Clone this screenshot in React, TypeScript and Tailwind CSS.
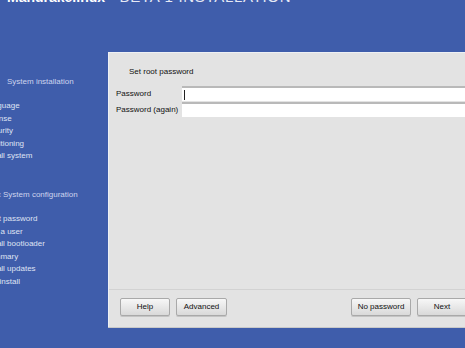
const installSteps = ["Language", "License", "Security", "Partitioning", "Install system"];
const configSteps = ["Root password", "Add a user", "Install bootloader", "Summary", "Install updates", "Exit install"];

function Button({ label, width }: { label: string; width: string }) {
  return (
    <button
      className={`${width} h-[18px] rounded-[2px] border border-[#a9a9a9] bg-gradient-to-b from-[#f7f7f7] to-[#d9d9d9] text-[8px] leading-none text-[#111] shadow-[0_1px_0_#c4c4c4]`}
    >
      {label}
    </button>
  );
}

function Field({ label, focused }: { label: string; focused?: boolean }) {
  return (
    <div className="flex h-[15px] items-center">
      <span className="w-[66px] shrink-0 text-[8px] leading-none text-[#111]">{label}</span>
      <div className="flex h-[15px] flex-1 items-center border-t-2 border-[#b9b9b9] bg-white pl-[2px]">
        {focused && <span className="h-[10px] w-px bg-[#222]" />}
      </div>
    </div>
  );
}

export default function App() {
  return (
    <div
      className="flex h-[348px] w-[465px] flex-col overflow-hidden bg-[#3f5dab]"
      style={{ fontFamily: '"Liberation Sans", Arial, sans-serif' }}
    >
      {/* Title, cut off by the top of the window */}
      <div className="h-[52px] shrink-0">
        <p className="-mt-[11px] ml-[7px] flex items-baseline whitespace-nowrap leading-none text-white">
          <span className="text-[14px] font-bold">Mandrakelinux</span>
          <span className="ml-[4px] text-[15px] tracking-[0.7px] text-[#e6e9f5]">- BETA 1 INSTALLATION</span>
        </p>
      </div>

      <div className="flex flex-1">
        {/* Step list */}
        <div className="w-[108px] shrink-0 pt-[24px] text-[8px] leading-[12.5px] text-[#dfe3f3]">
          <p className="ml-[7px] whitespace-nowrap text-[#cdd4ee]">System installation</p>
          <ul className="-ml-[16px] mt-[11.5px]">
            {installSteps.map((s) => (
              <li key={s} className="whitespace-nowrap">{s}</li>
            ))}
          </ul>
          <p className="mt-[26.5px] flex whitespace-nowrap text-[#cdd4ee]">
            <span className="-ml-[3px] mr-[2px] text-[#aeb8e0]">c</span>System configuration
          </p>
          <ul className="-ml-[16px] mt-[11.5px]">
            {configSteps.map((s) => (
              <li key={s} className="whitespace-nowrap">{s}</li>
            ))}
          </ul>
        </div>

        {/* Dialog panel */}
        <div className="flex h-[275px] w-[370px] shrink-0 flex-col border-l border-t border-[#eef0f4] bg-[#e3e3e3] shadow-[0_1px_0_#c9c9c9]">
          <p className="ml-[20px] mt-[14px] text-[8px] leading-[10px] text-[#111]">Set root password</p>
          <div className="ml-[7px] mt-[9px] flex flex-col gap-[1px]">
            <Field label="Password" focused />
            <Field label="Password (again)" />
          </div>
          <div className="flex-1" />
          <div className="flex h-[38px] items-start border-t border-[#d2d2d2] px-[11px] pt-[8px]">
            <div className="flex gap-[6px]">
              <Button label="Help" width="w-[50px]" />
              <Button label="Advanced" width="w-[51px]" />
            </div>
            <div className="ml-auto flex gap-[6px]">
              <Button label="No password" width="w-[60px]" />
              <Button label="Next" width="w-[50px]" />
            </div>
          </div>
        </div>
      </div>
    </div>
  );
}
